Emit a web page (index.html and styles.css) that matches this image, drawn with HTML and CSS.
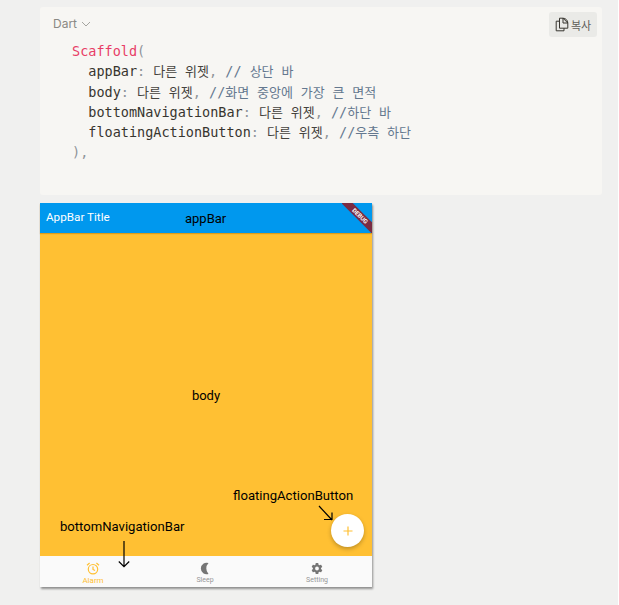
FILE: index.html
```html
<!DOCTYPE html>
<html lang="ko">
<head>
<meta charset="utf-8">
<title>Scaffold</title>
<link rel="stylesheet" href="styles.css">
</head>
<body>
<main class="page">
  <section class="code-card">
    <header class="code-head">
      <span class="lang">Dart
        <svg class="chev" width="10" height="6" viewBox="0 0 10 6"><path d="M1 1l4 4 4-4" fill="none" stroke="#a5a5a0" stroke-width="1"/></svg>
      </span>
      <button class="copy">
        <svg width="14" height="15" viewBox="0 0 14 15" fill="none" stroke="#37352f" stroke-width="1"><path d="M4.500 4.200H1.200v9.600h7.800v-2.600"/><path d="M4.500 1.200h3.500l4.800 4.800v5.200H4.500z"/><path d="M8 1.200a4.800 4.800 0 0 1 4.800 4.800H8z"/></svg>
        <span>복사</span>
      </button>
    </header>
<pre class="code"><span class="fn">Scaffold</span><span class="p">(</span>
  appBar<span class="p">:</span> <span class="ko">다른 위젯</span><span class="p">,</span> <span class="c">// <span class="ko">상단 바</span></span>
  body<span class="p">:</span> <span class="ko">다른 위젯</span><span class="p">,</span> <span class="c">//<span class="ko">화면 중앙에 가장 큰 면적</span></span>
  bottomNavigationBar<span class="p">:</span> <span class="ko">다른 위젯</span><span class="p">,</span> <span class="c">//<span class="ko">하단 바</span></span>
  floatingActionButton<span class="p">:</span> <span class="ko">다른 위젯</span><span class="p">,</span> <span class="c">//<span class="ko">우측 하단</span></span>
<span class="p">),</span></pre>
  </section>

  <section class="phone">
    <header class="appbar">
      <span class="appbar-title">AppBar Title</span>
      <span class="appbar-label">appBar</span>
      <div class="debug"><span>DEBUG</span></div>
    </header>
    <div class="body">
      <span>body</span>
      <span class="note note-fab">floatingActionButton</span>
      <svg class="arrow-fab" width="16" height="17" viewBox="0 0 16 17" fill="none" stroke="#000" stroke-width="1.200"><path d="M1 1l13 14M14 7.500V14.500H6"/></svg>
      <span class="note note-nav">bottomNavigationBar</span>
      <button class="fab">
        <svg width="10" height="10" viewBox="0 0 10 10" stroke="#ffc033" stroke-width="1.200"><path d="M5 .5v9M.5 5h9"/></svg>
      </button>
    </div>
    <svg class="arrow-nav" width="12" height="27" viewBox="0 0 12 27" fill="none" stroke="#000" stroke-width="1.200"><path d="M6 0v25.500M.8 20.500l5.200 5.200 5.200-5.200"/></svg>
    <nav class="nav">
      <div class="nav-item active">
        <svg width="14" height="13" viewBox="0 0 14 13" fill="none" stroke="#ffc033" stroke-width="1.200"><circle cx="7" cy="7.200" r="4.700"/><path d="M7 4.600v2.800l2 1.200M1 3.200L3.600 1M13 3.200L10.400 1"/></svg>
        <span>Alarm</span>
      </div>
      <div class="nav-item">
        <svg width="14" height="13" viewBox="0 0 14 13"><path d="M10.500 1A5.800 5.800 0 1 0 10.500 12 8 8 0 0 1 10.500 1z" fill="#757575"/></svg>
        <span>Sleep</span>
      </div>
      <div class="nav-item">
        <svg width="14" height="13" viewBox="0 0 24 24"><path fill="#757575" fill-rule="evenodd" d="M19.400 13c.04-.3.100-.65.100-1s-.06-.7-.1-1l2.100-1.650c.2-.15.250-.42.120-.64l-2-3.460c-.12-.22-.4-.3-.6-.22l-2.500 1c-.5-.4-1.100-.7-1.700-1l-.4-2.650A.5.500 0 0 0 14 2h-4a.5.500 0 0 0-.5.420l-.4 2.650c-.6.25-1.200.6-1.700 1l-2.500-1c-.2-.08-.5 0-.6.220l-2 3.460c-.13.220-.07.490.12.640L4.500 11c-.04.3-.1.650-.1 1s.06.700.1 1l-2.100 1.650c-.2.150-.25.420-.12.640l2 3.460c.1.220.4.300.6.220l2.500-1c.5.400 1.100.700 1.700 1l.4 2.650c.04.240.25.420.5.420h4c.25 0 .46-.18.500-.42l.4-2.650c.6-.25 1.200-.6 1.700-1l2.500 1c.2.080.5 0 .6-.22l2-3.460c.13-.22.070-.49-.12-.64L19.400 13zM12 15.500a3.500 3.500 0 1 1 0-7 3.500 3.500 0 0 1 0 7z"/></svg>
        <span>Setting</span>
      </div>
    </nav>
  </section>
</main>
</body>
</html>
```

FILE: styles.css
```css
* { box-sizing: border-box; }
html, body { margin: 0; height: 100%; overflow: hidden; }
body { background: #fff; font-family: "Roboto", sans-serif; }
.page {
  width: 618px;
  height: 605px;
  background: #f0f0ef;
  padding: 7px 16px 0 40px;
}
.code-card {
  height: 188px;
  background: #f7f6f3;
  border-radius: 3px;
  padding: 5px 5px 0 13px;
}
.code-head {
  display: flex;
  justify-content: space-between;
  align-items: flex-start;
  height: 25px;
}
.lang {
  display: flex;
  align-items: center;
  gap: 4px;
  height: 24px;
  font: 12px/24px "Inter", "Noto Sans CJK KR", sans-serif;
  color: #8a8984;
}
.copy {
  display: flex;
  align-items: center;
  gap: 2px;
  width: 48px;
  height: 25px;
  padding: 0 0 0 6px;
  border: 0;
  border-radius: 3px;
  background: #eaeae7;
  font: 11px "Inter", "Noto Sans CJK KR", sans-serif;
  color: #5f5e5a;
}
.code {
  margin: 4px 0 0 19px;
  font: 13.500px/20.250px "DejaVu Sans Mono", "Noto Sans CJK KR", monospace;
  color: #37352f;
  white-space: pre;
}
.ko { font-size: 13px; line-height: 1; color: #45433e; }
.fn { color: #e83d66; }
.p { color: #8f9499; }
.c, .c .ko { color: #64788f; }

.phone {
  position: relative;
  width: 332px;
  height: 384px;
  margin-top: 8px;
  background: #ffc033;
  box-shadow: 1px 1.500px 2px rgba(0, 0, 0, .4);
  display: flex;
  flex-direction: column;
}
.appbar {
  position: relative;
  flex: 0 0 30px;
  display: flex;
  align-items: center;
  padding-left: 6px;
  background: #0098ee;
  overflow: hidden;
  box-shadow: 0 1px 1px rgba(190, 120, 0, .5);
  z-index: 1;
}
.appbar-title { font-size: 11.700px; color: #fff; margin-top: -3px; }
.appbar-label {
  position: absolute;
  left: 145px;
  top: 8px;
  font-size: 13px;
  line-height: 16px;
  color: #000;
}
.debug {
  position: absolute;
  top: 0;
  right: 0;
  width: 30px;
  height: 30px;
  overflow: hidden;
}
.debug span {
  position: absolute;
  top: 8.500px;
  left: -4.500px;
  width: 44px;
  height: 8px;
  background: #7a2c44;
  transform: rotate(45deg);
  color: #fff;
  font-size: 6px;
  font-weight: 700;
  line-height: 8px;
  text-align: center;
}
.body {
  position: relative;
  flex: 1;
  display: flex;
  align-items: center;
  justify-content: center;
  padding-top: 2px;
  font-size: 13px;
  color: #000;
}
.note { position: absolute; font-size: 13.100px; line-height: 16px; color: #000; }
.note-fab { left: 193px; top: 255px; }
.note-nav { left: 20px; top: 286px; }
.arrow-fab { position: absolute; left: 278px; top: 272px; }
.arrow-nav { position: absolute; left: 78px; top: 338px; z-index: 2; }
.fab {
  position: absolute;
  left: 291px;
  top: 281px;
  width: 33px;
  height: 33px;
  padding: 0;
  border: 0;
  border-radius: 50%;
  background: #fff;
  box-shadow: 0 2px 4px rgba(0, 0, 0, .25);
  display: flex;
  align-items: center;
  justify-content: center;
}
.nav {
  flex: 0 0 31px;
  display: grid;
  grid-template-columns: 106px 118px 106px;
  background: #fafafa;
}
.nav-item {
  display: flex;
  flex-direction: column;
  align-items: center;
  gap: 1px;
  padding-top: 6px;
  font-size: 7px;
  line-height: 9px;
  color: #969696;
}
.nav-item.active { color: #ffc033; font-size: 8px; }
```
